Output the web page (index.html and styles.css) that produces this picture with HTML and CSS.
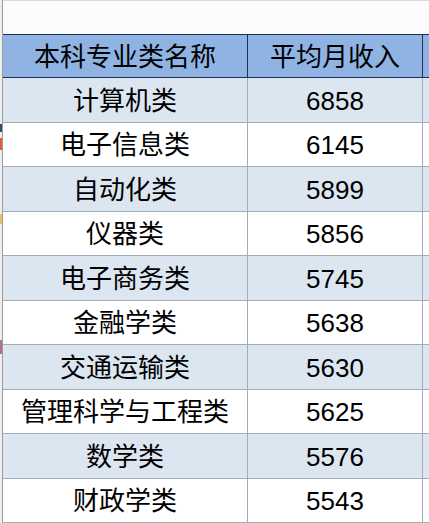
FILE: index.html
```html
<!DOCTYPE html>
<html lang="zh-CN">
<head>
<meta charset="utf-8">
<title>本科专业类平均月收入</title>
<link rel="stylesheet" href="styles.css">
</head>
<body>
<div class="page">
  <div class="gutter">
    <div class="gap g1"></div>
    <div class="mark m-dark"></div>
    <div class="gap g2"></div>
    <div class="mark m-red"></div>
    <div class="gap g3"></div>
    <div class="mark m-yellow"></div>
    <div class="gap g4"></div>
    <div class="mark m-pink"></div>
  </div>
  <div class="main">
    <div class="topbar"></div>
    <div class="table">
      <div class="cell head first">本科专业类名称</div>
      <div class="cell head">平均月收入</div>
      <div class="cell head extra"></div>

      <div class="cell band first">计算机类</div><div class="cell band num">6858</div><div class="cell band extra"></div>
      <div class="cell first">电子信息类</div><div class="cell num">6145</div><div class="cell extra"></div>
      <div class="cell band first">自动化类</div><div class="cell band num">5899</div><div class="cell band extra"></div>
      <div class="cell first">仪器类</div><div class="cell num">5856</div><div class="cell extra"></div>
      <div class="cell band first">电子商务类</div><div class="cell band num">5745</div><div class="cell band extra"></div>
      <div class="cell first">金融学类</div><div class="cell num">5638</div><div class="cell extra"></div>
      <div class="cell band first">交通运输类</div><div class="cell band num">5630</div><div class="cell band extra"></div>
      <div class="cell first">管理科学与工程类</div><div class="cell num">5625</div><div class="cell extra"></div>
      <div class="cell band first">数学类</div><div class="cell band num">5576</div><div class="cell band extra"></div>
      <div class="cell first">财政学类</div><div class="cell num">5543</div><div class="cell extra"></div>
    </div>
  </div>
</div>
</body>
</html>
```
FILE: styles.css
```css
html, body {
  margin: 0;
  padding: 0;
  background: #ffffff;
}

.page {
  display: flex;
  width: 429px;
  height: 523px;
  overflow: hidden;
}

.gutter {
  width: 2px;
  flex: none;
  background: #eeeeee;
  border-right: 1px solid #9c9c9c;
  display: flex;
  flex-direction: column;
}

.gap { flex: none; }
.g1 { height: 124px; }
.g2 { height: 6px; }
.g3 { height: 64px; }
.g4 { height: 116px; }

.mark { flex: none; width: 2px; }
.m-dark { height: 8px; background: #3a4a68; }
.m-red { height: 12px; background: #e0603a; }
.m-yellow { height: 10px; background: #e8c060; }
.m-pink { height: 14px; background: #b07088; }

.main {
  flex: 1;
  display: flex;
  flex-direction: column;
  min-width: 0;
}

.topbar {
  height: 33px;
  flex: none;
  background: #fbfbfb;
  border-top: 1px solid #dcdcdc;
}

.table {
  display: grid;
  grid-template-columns: 245px 175px 1fr;
  grid-template-rows: 44px repeat(10, 44.5px);
}

.cell {
  display: flex;
  align-items: center;
  justify-content: center;
  font-family: "Liberation Sans", "Noto Sans CJK SC", sans-serif;
  font-size: 26px;
  font-weight: 400;
  color: #000000;
  background: #ffffff;
  border-bottom: 1px solid #a3acb9;
  border-right: 1px solid #a3acb9;
  box-sizing: border-box;
  white-space: nowrap;
  line-height: 1;
  padding-top: 2px;
}

.cell.band {
  background: #dce6f1;
}

.cell.head {
  background: #8fb4e3;
  border-top: 1px solid #1c2f52;
  border-bottom: 1px solid #1c2f52;
  border-right: 1px solid #1c2f52;
}

.cell.head.extra {
  border-right: none;
}

.cell.extra {
  border-right: none;
}
```
